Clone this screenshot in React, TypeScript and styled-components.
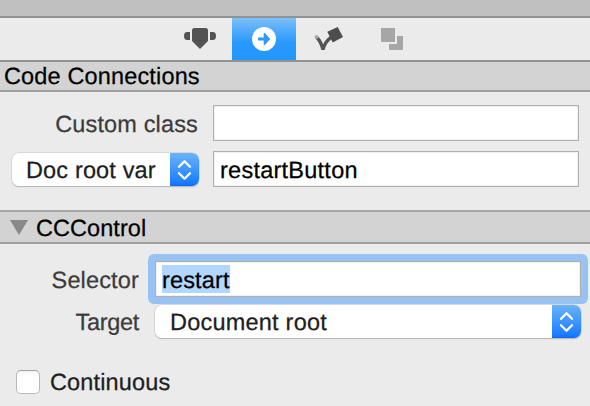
import React from "react";
import styled, { createGlobalStyle } from "styled-components";

const Global = createGlobalStyle`
  * { box-sizing: border-box; }
  body {
    margin: 0;
    background: #ebebeb;
    font-family: "Liberation Sans", Arial, sans-serif;
    font-size: 23.5px;
    line-height: 28px;
    text-rendering: geometricPrecision;
    color: #000;
    overflow: hidden;
  }
`;

const Panel = styled.main`
  width: 590px;
  height: 406px;
  display: flex;
  flex-direction: column;
  background: #ebebeb;
`;

const TitleStrip = styled.div`
  height: 18px;
  background: #c0c0c0;
  border-bottom: 2px solid #929292;
`;

const Toolbar = styled.nav`
  height: 44px;
  display: flex;
  padding-left: 168px;
  border-bottom: 2px solid #929292;
`;

const Tab = styled.button<{ $active?: boolean }>`
  width: 64px;
  height: 42px;
  padding: 0;
  border: 0;
  background: ${(p) => (p.$active ? "linear-gradient(#7cbffb, #2899fc 58%, #2297fc)" : "transparent")};
  svg { display: block; }
`;

const SectionHeader = styled.h2<{ $ruled?: boolean }>`
  margin: 0;
  height: ${(p) => (p.$ruled ? 34 : 30)}px;
  display: flex;
  align-items: center;
  padding: 0 0 0 ${(p) => (p.$ruled ? 10 : 4)}px;
  gap: 8px;
  font: inherit;
  background: #d3d3d3;
  border-top: ${(p) => (p.$ruled ? "2px solid #a5a5a5" : "0")};
  border-bottom: 2px solid #a0a0a0;
`;

const Txt = styled.span<{ $track?: number; $tone?: string; $nudge?: number }>`
  display: block;
  white-space: pre;
  letter-spacing: ${(p) => p.$track ?? 0.15}px;
  color: ${(p) => p.$tone ?? "#000"};
  -webkit-text-stroke: 0.25px currentColor;
  padding-top: ${(p) => p.$nudge ?? 0}px;
`;

const ConnectionGrid = styled.section`
  display: grid;
  grid-template-columns: 187px 366px;
  grid-template-rows: 36px 36px;
  column-gap: 14px;
  row-gap: 10px;
  padding: 13px 0 0 12px;
  height: 118px;
`;

const LabelCell = styled.label<{ $inset?: number }>`
  display: flex;
  justify-content: flex-end;
  align-items: center;
  padding-right: ${(p) => p.$inset ?? 0}px;
`;

const Field = styled.div`
  height: 36px;
  display: flex;
  align-items: center;
  padding-left: 6px;
  background: #fff;
  border: 1px solid #b0b0b0;
  box-shadow: inset 0 0 0 1px #f0f0f0;
`;

const FocusFrame = styled.div`
  height: 50px;
  margin: 0 -7px;
  padding: 7px;
  border-radius: 6px;
  background: #97c2f2;
`;

const Selected = styled.span`
  display: block;
  height: 28px;
  width: 68px;
  background: #b2d7fe;
`;

const Popup = styled.div<{ $indent?: number }>`
  height: 33px;
  display: flex;
  align-items: stretch;
  justify-content: space-between;
  padding-left: ${(p) => p.$indent ?? 14}px;
  border-radius: 7px;
  background: #fff;
  box-shadow: 0 0 0 0.5px #c4c4c4, 0 1px 1px #a8a8a8;
  overflow: hidden;
`;

const PopupText = styled.div`
  display: flex;
  align-items: center;
`;

const Stepper = styled.div`
  width: 29px;
  background: linear-gradient(#6bb3fa, #1a7dff 90%, #1269f5);
  svg { display: block; }
`;

const ControlGrid = styled.section`
  display: grid;
  grid-template-columns: 139px 426px;
  column-gap: 16px;
  grid-template-rows: 50px 34px;
  row-gap: 1px;
  padding-top: 10px;
`;

const CheckRow = styled.label`
  display: flex;
  align-items: center;
  gap: 10px;
  padding: 29px 0 0 16px;
`;

const CheckBox = styled.span`
  width: 24px;
  height: 24px;
  border-radius: 5px;
  border: 1px solid #b9b9b9;
  border-top-color: #a2a2a2;
  background: linear-gradient(#f4f4f4, #fff 22%);
`;

const PopupCell = styled.div<{ $top?: number }>`
  padding-top: ${(p) => p.$top ?? 0}px;
`;

const Arrows = () => (
  <Stepper>
    <svg width="29" height="33" viewBox="0 0 29 33" fill="none" stroke="#fff" strokeWidth="2.3" strokeLinecap="round" strokeLinejoin="round">
      <path d="M9 13.8 14.5 8.300 20 13.8M9 20.2 14.5 25.700 20 20.2" />
    </svg>
  </Stepper>
);

export default function App() {
  return (
    <>
      <Global />
      <Panel>
        <TitleStrip />
        <Toolbar>
          <Tab aria-label="Item properties">
            <svg width="64" height="42" fill="#535353">
              <path d="M25.5 10h13l1.500 1.500V23l-8 8-8-8V11.500z" />
              <path d="M22 14v8h-3q-3 0-3-4t3-4zM42 14h3q3 0 3 4t-3 4h-3z" />
            </svg>
          </Tab>
          <Tab $active aria-label="Code connections">
            <svg width="64" height="42">
              <circle cx="32" cy="21" r="12" fill="#fff" />
              <path d="M26 19.500h5.700V15h1.300L38.200 21 33 27h-1.300v-4.500H26z" fill="#2e9bfa" />
            </svg>
          </Tab>
          <Tab aria-label="Physics">
            <svg width="64" height="42">
              <path d="M20.800 19.500Q25 23.500 27 31.500Q29 23.500 35 19.500" fill="none" stroke="#535353" strokeWidth="3.400" />
              <circle cx="20.400" cy="19" r="1.900" fill="#aaa" />
              <path d="M31.300 13.700 41.700 9 47 19 36.700 24.500z" fill="#4d4d4d" />
            </svg>
          </Tab>
          <Tab aria-label="Templates">
            <svg width="64" height="42" fill="#a6a6a6">
              <path d="M21 10h14v14H21zM37 18h6v14H29v-6h8z" />
            </svg>
          </Tab>
        </Toolbar>
        <SectionHeader><Txt>Code Connections</Txt></SectionHeader>
        <ConnectionGrid>
          <LabelCell $inset={1}><Txt $tone="#3c3c3c" $nudge={2}>Custom class</Txt></LabelCell>
          <Field />
          <PopupCell $top={2}>
            <Popup>
              <PopupText><Txt $tone="#202020">Doc root var</Txt></PopupText>
              <Arrows />
            </Popup>
          </PopupCell>
          <Field><Txt $nudge={2} $track={0.25}>restartButton</Txt></Field>
        </ConnectionGrid>
        <SectionHeader $ruled>
          <svg width="18" height="15"><path d="M0 0h18L9 15z" fill="#898989" /></svg>
          <Txt $nudge={2} $track={0.05}>CCControl</Txt>
        </SectionHeader>
        <ControlGrid>
          <LabelCell><Txt $tone="#3c3c3c" $nudge={2}>Selector</Txt></LabelCell>
          <FocusFrame>
            <Field><Selected><Txt $nudge={1}>restart</Txt></Selected></Field>
          </FocusFrame>
          <LabelCell><Txt $tone="#3c3c3c" $track={-0.3}>Target</Txt></LabelCell>
          <PopupCell>
            <Popup $indent={15}>
              <PopupText><Txt $tone="#202020" $track={0.22}>Document root</Txt></PopupText>
              <Arrows />
            </Popup>
          </PopupCell>
        </ControlGrid>
        <CheckRow>
          <CheckBox />
          <Txt $tone="#202020">Continuous</Txt>
        </CheckRow>
      </Panel>
    </>
  );
}
